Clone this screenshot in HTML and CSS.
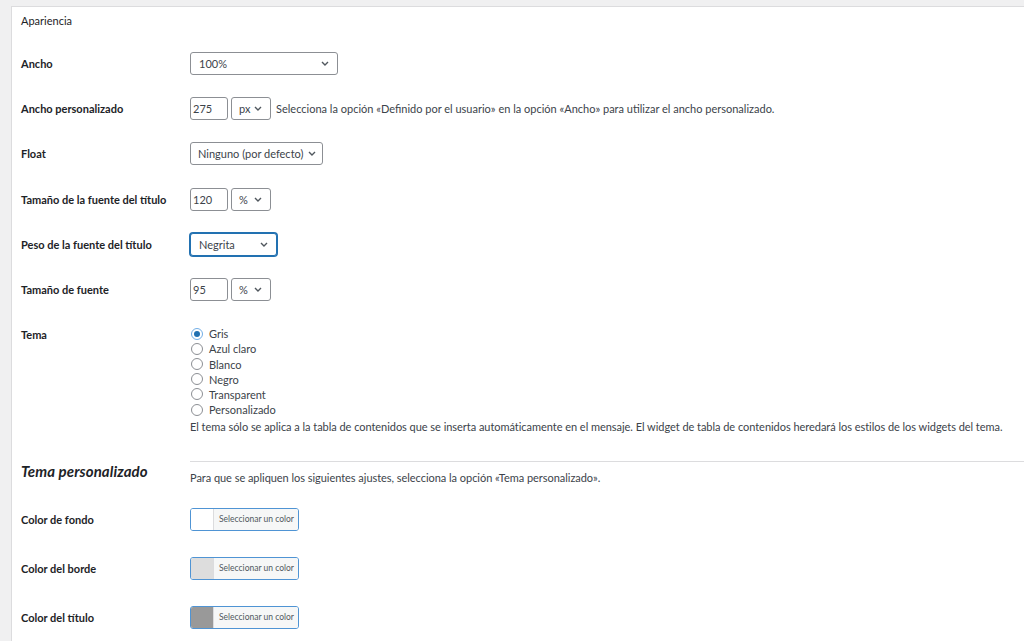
FILE: index.html
```html
<!DOCTYPE html>
<html lang="es">
<head>
  <meta charset="UTF-8">
  <title>Apariencia</title>
  <link rel="stylesheet" href="styles.css">
</head>
<body>
  <div class="panel">
    <div class="panel-title">Apariencia</div>

    <div class="row">
      <div class="label">Ancho</div>
      <div class="field">
        <div class="select w-wide">100%<svg viewBox="0 0 8 5"><path d="M1 1l3 3 3-3"/></svg></div>
      </div>
    </div>

    <div class="row">
      <div class="label">Ancho personalizado</div>
      <div class="field">
        <div class="input">275</div>
        <div class="select w-unit">px<svg viewBox="0 0 8 5"><path d="M1 1l3 3 3-3"/></svg></div>
        <span class="hint">Selecciona la opción «Definido por el usuario» en la opción «Ancho» para utilizar el ancho personalizado.</span>
      </div>
    </div>

    <div class="row">
      <div class="label">Float</div>
      <div class="field">
        <div class="select w-float">Ninguno (por defecto)<svg viewBox="0 0 8 5"><path d="M1 1l3 3 3-3"/></svg></div>
      </div>
    </div>

    <div class="row">
      <div class="label">Tamaño de la fuente del título</div>
      <div class="field">
        <div class="input">120</div>
        <div class="select w-unit">%<svg viewBox="0 0 8 5"><path d="M1 1l3 3 3-3"/></svg></div>
      </div>
    </div>

    <div class="row">
      <div class="label">Peso de la fuente del título</div>
      <div class="field">
        <div class="select w-weight focused">Negrita<svg viewBox="0 0 8 5"><path d="M1 1l3 3 3-3"/></svg></div>
      </div>
    </div>

    <div class="row">
      <div class="label">Tamaño de fuente</div>
      <div class="field">
        <div class="input">95</div>
        <div class="select w-unit">%<svg viewBox="0 0 8 5"><path d="M1 1l3 3 3-3"/></svg></div>
      </div>
    </div>

    <div class="row">
      <div class="label">Tema</div>
      <div class="field column">
        <div class="radios">
          <label class="radio"><span class="dot checked"></span>Gris</label>
          <label class="radio"><span class="dot"></span>Azul claro</label>
          <label class="radio"><span class="dot"></span>Blanco</label>
          <label class="radio"><span class="dot"></span>Negro</label>
          <label class="radio"><span class="dot"></span>Transparent</label>
          <label class="radio"><span class="dot"></span>Personalizado</label>
        </div>
        <p class="description">El tema sólo se aplica a la tabla de contenidos que se inserta automáticamente en el mensaje. El widget de tabla de contenidos heredará los estilos de los widgets del tema.</p>
      </div>
    </div>

    <!-- Tema personalizado -->
    <div class="section">
      <h2 class="section-title">Tema personalizado</h2>
      <div class="section-body">
        <p class="description">Para que se apliquen los siguientes ajustes, selecciona la opción «Tema personalizado».</p>
      </div>
    </div>

    <div class="row color-row first">
      <div class="label">Color de fondo</div>
      <div class="field">
        <div class="color-btn"><span class="swatch" style="background-color: #ffffff"></span><span class="color-text">Seleccionar un color</span></div>
      </div>
    </div>

    <div class="row color-row">
      <div class="label">Color del borde</div>
      <div class="field">
        <div class="color-btn"><span class="swatch" style="background-color: #dddddd"></span><span class="color-text">Seleccionar un color</span></div>
      </div>
    </div>

    <div class="row color-row">
      <div class="label">Color del título</div>
      <div class="field">
        <div class="color-btn"><span class="swatch" style="background-color: #999999"></span><span class="color-text">Seleccionar un color</span></div>
      </div>
    </div>
  </div>
</body>
</html>
```

FILE: styles.css
```css
:root {
  --text-color: #1d2327;
  --muted-color: #3c434a;
  --border-color: #8c8f94;
  --blue: #2271b1;
  --page-bg: #f0f0f1;
}

* {
  box-sizing: border-box;
  margin: 0;
  padding: 0;
}

html, body {
  height: 100%;
  overflow: hidden;
}

body {
  font-family: Lato, "Liberation Sans", sans-serif;
  font-size: 11px;
  color: var(--text-color);
  background-color: var(--page-bg);
  padding: 6px 0 0 11px;
}

.panel {
  background-color: white;
  border: 1px solid #dcdcde;
  border-right: none;
  border-bottom: none;
  padding: 0 0 0 9px;
  min-height: 100%;
}

.panel-title {
  padding: 6px 0 12px;
  line-height: 16px;
}

.row {
  display: grid;
  grid-template-columns: 169px 1fr;
  padding: 11px 0 11.2px;
}

.label {
  font-weight: 700;
  line-height: 23px;
}

.field {
  display: flex;
  align-items: center;
  gap: 3px;
}

.field.column {
  flex-direction: column;
  align-items: flex-start;
  gap: 0;
}

.select {
  height: 23px;
  border: 1px solid var(--border-color);
  border-radius: 3px;
  padding: 0 8px;
  display: flex;
  align-items: center;
  justify-content: space-between;
  color: var(--muted-color);
  background-color: white;
}

.select svg {
  width: 8px;
  height: 5px;
  fill: none;
  stroke: #50575e;
  stroke-width: 1.4;
}

.select.focused {
  border-color: var(--blue);
  box-shadow: 0 0 0 1px var(--blue);
}

.w-wide { width: 148px; }
.w-unit { width: 40px; padding-left: 7px; }
.w-float { width: 133px; padding-left: 7px; padding-right: 6px; }
.w-weight { width: 87px; }

.input {
  width: 38px;
  height: 23px;
  border: 1px solid var(--border-color);
  border-radius: 3px;
  padding: 0 2px;
  line-height: 21px;
  color: var(--muted-color);
}

.hint {
  margin-left: 2px;
  color: var(--muted-color);
}

.radios {
  margin-top: 3px;
}

.radio {
  display: flex;
  align-items: center;
  height: 15.2px;
  color: var(--muted-color);
}

.dot {
  width: 12px;
  height: 12px;
  border: 1px solid var(--border-color);
  border-radius: 50%;
  margin: 0 6px 0 1px;
  display: flex;
  align-items: center;
  justify-content: center;
}

.dot.checked {
  border-color: #72aee6;
}

.dot.checked::after {
  content: "";
  width: 6px;
  height: 6px;
  border-radius: 50%;
  background-color: var(--blue);
}

.description {
  margin-top: 2px;
  line-height: 16px;
  color: var(--muted-color);
  letter-spacing: -0.04px;
}

.section {
  display: grid;
  grid-template-columns: 169px 1fr;
  padding-top: 15px;
}

.section-title {
  font-size: 15px;
  font-style: italic;
  font-weight: 700;
  line-height: 20px;
  letter-spacing: 0.1px;
}

.section-body {
  border-top: 1px solid #dcdcde;
  padding-top: 8px;
}

.section-body .description {
  margin-top: 0;
}

.color-row {
  padding: 13px 0;
}

.color-row.first {
  margin-top: 9px;
}

.color-btn {
  width: 109px;
  height: 23px;
  border: 1px solid #4f94d4;
  border-radius: 3px;
  display: flex;
  overflow: hidden;
}

.swatch {
  width: 23px;
  border-right: 1px solid #dcdcde;
}

.color-text {
  flex: 1;
  background-color: #f6f7f7;
  font-size: 8.5px;
  line-height: 21px;
  padding-left: 5px;
  color: #50575e;
  white-space: nowrap;
}
```
